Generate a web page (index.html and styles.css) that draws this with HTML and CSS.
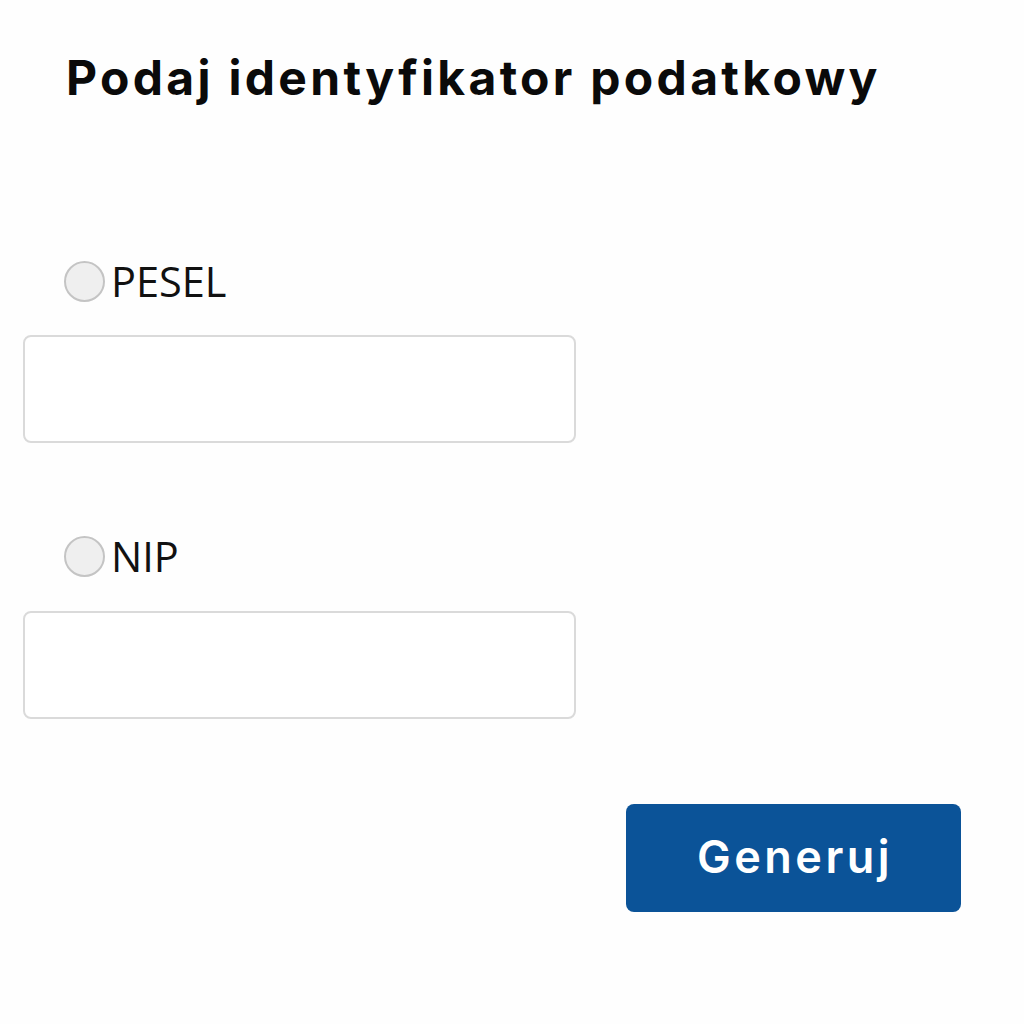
FILE: index.html
```html
<!DOCTYPE html>
<html lang="pl">
<head>
<meta charset="utf-8">
<link rel="stylesheet" href="styles.css">
</head>
<body>
<main class="page">
  <h1 class="title">Podaj identyfikator podatkowy</h1>
  <form class="form">
    <label class="option">
      <span class="radio"></span>
      <span class="option-label">PESEL</span>
    </label>
    <div class="field"></div>
    <label class="option option-second">
      <span class="radio"></span>
      <span class="option-label">NIP</span>
    </label>
    <div class="field"></div>
    <div class="actions">
      <button type="button" class="btn">Generuj</button>
    </div>
  </form>
</main>
</body>
</html>
```
FILE: styles.css
```css
html, body {
  margin: 0;
  padding: 0;
  background: #fefefe;
}
.page {
  width: 1024px;
  height: 1024px;
  box-sizing: border-box;
  padding: 48px 0 0 23px;
}
.title {
  margin: 0 0 0 43px;
  font-family: Inter, "Noto Sans", sans-serif;
  font-weight: 700;
  font-size: 48px;
  line-height: 60px;
  color: #0a0a0a;
  letter-spacing: 3.3px;
  white-space: nowrap;
}
.form {
  display: flex;
  flex-direction: column;
  margin-top: 153px;
}
.option {
  display: flex;
  align-items: center;
  gap: 6px;
  margin-left: 41px;
  height: 40px;
}
.option-second {
  margin-top: 93px;
}
.radio {
  width: 37px;
  height: 37px;
  border-radius: 50%;
  border: 2px solid #c4c4c4;
  background: #efefef;
  flex: none;
}
.option-label {
  font-family: "Open Sans", sans-serif;
  font-size: 41.5px;
  color: #111;
  line-height: 40px;
}
.field {
  margin-top: 34px;
  width: 549px;
  height: 104px;
  border: 2px solid #dadada;
  border-radius: 8px;
  background: #fff;
}
.option-second + .field {
  margin-top: 35px;
}
.actions {
  display: flex;
  justify-content: flex-end;
  margin-top: 85px;
  width: 938px;
}
.btn {
  width: 335px;
  height: 108px;
  border: 0;
  border-radius: 8px;
  background: #0b5398;
  color: #fff;
  font-family: Inter, "Noto Sans", sans-serif;
  font-weight: 600;
  font-size: 45px;
  letter-spacing: 3.5px;
  padding: 0 0 4px 3px;
}
```
